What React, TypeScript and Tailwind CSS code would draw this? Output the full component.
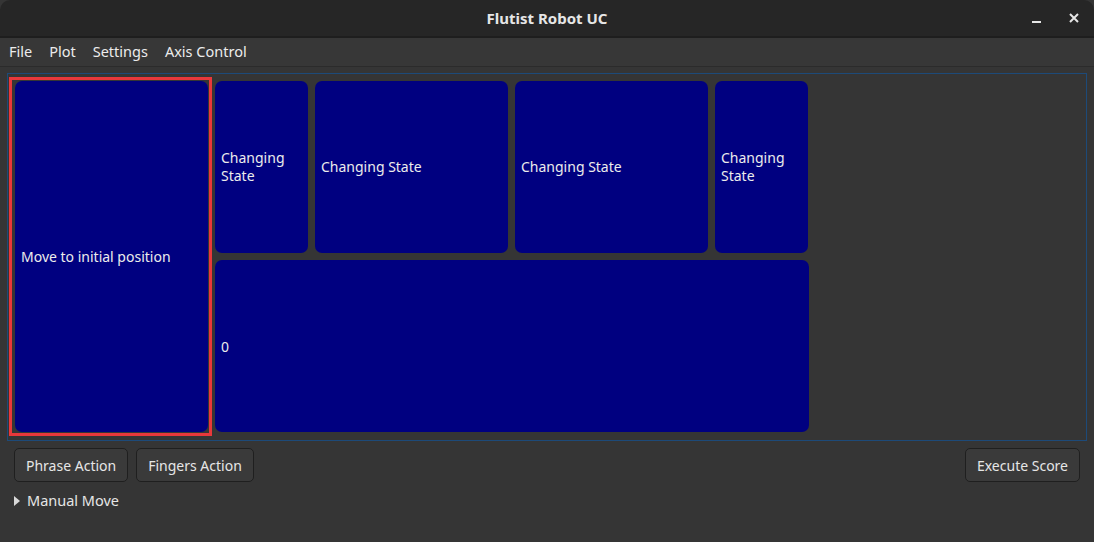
import { useState } from "react"

const font = { fontFamily: '"Noto Sans", "Open Sans", sans-serif' }

function StateButton({ label, wide }: { label: string; wide?: boolean }) {
  return (
    <button
      className={`h-full ${wide ? "w-[193px]" : "w-[93px]"} rounded-[7px] bg-[#000080] px-[6px] text-left text-[14px] leading-[18px] text-[#ececec]`}
    >
      {label}
    </button>
  )
}

export default function App() {
  const [open, setOpen] = useState(false)
  const menus = ["File", "Plot", "Settings", "Axis Control"]

  return (
    <div className="h-[542px] w-[1094px] overflow-hidden bg-[#353535] text-[#e8e8e8]" style={font}>
      {/* header bar */}
      <div className="relative flex h-[38px] items-center justify-center rounded-t-[10px] border-b-2 border-[#1e1e1e] bg-[#262626]">
        <span className="text-[15px] font-bold text-[#e6e6e6]">Flutist Robot UC</span>
        <div className="absolute right-[14px] top-0 flex h-full items-center gap-[26px]">
          <svg width="10" height="12" viewBox="0 0 10 12">
            <rect x="0" y="9" width="9" height="2" fill="#e6e6e6" />
          </svg>
          <svg width="12" height="12" viewBox="0 0 12 12">
            <path d="M2 2 L10 10 M10 2 L2 10" stroke="#e6e6e6" strokeWidth="2" />
          </svg>
        </div>
      </div>

      {/* menu bar */}
      <div className="flex h-[29px] items-center gap-[17px] border-b border-[#2b2b2b] bg-[#373737] px-[9px] text-[14.5px] text-[#ececec]">
        {menus.map((m) => (
          <span key={m}>{m}</span>
        ))}
      </div>

      {/* state panel */}
      <div className="mx-[7px] mt-[6px] border border-[#1d4a79] px-[7px] pt-[7px] pb-[8px]">
        <div className="flex h-[351px] gap-[7px]">
          <div className="relative h-full">
            <span className="pointer-events-none absolute -left-[6px] -top-[4px] -right-[4px] -bottom-[4px] border-[3px] border-[#e8383b]" />
            <StateButton label="Move to initial position" wide />
          </div>
          <div className="flex flex-col gap-[7px]">
            <div className="flex h-[172px] gap-[7px]">
              <StateButton label="Changing State" />
              <StateButton label="Changing State" wide />
              <StateButton label="Changing State" wide />
              <StateButton label="Changing State" />
            </div>
            <button className="h-[172px] w-[594px] rounded-[7px] bg-[#000080] px-[6px] text-left text-[14px] text-[#ececec]">
              0
            </button>
          </div>
        </div>
      </div>

      {/* actions */}
      <div className="mt-[7px] flex items-center px-[14px]">
        <div className="flex gap-[8px]">
          <button className="h-[34px] rounded-[5px] border border-[#1f1f1f] bg-[#3a3a3a] px-[11px] text-[14px] text-[#e6e6e6]">
            Phrase Action
          </button>
          <button className="h-[34px] rounded-[5px] border border-[#1f1f1f] bg-[#3a3a3a] px-[11px] text-[14px] text-[#e6e6e6]">
            Fingers Action
          </button>
        </div>
        <button className="ml-auto h-[34px] rounded-[5px] border border-[#1f1f1f] bg-[#3a3a3a] px-[11px] text-[14px] text-[#e6e6e6]">
          Execute Score
        </button>
      </div>

      <button
        onClick={() => setOpen(!open)}
        className="mt-[8px] flex items-center gap-[7px] px-[14px] text-[14.5px] text-[#e6e6e6]"
      >
        <svg width="6" height="10" viewBox="0 0 6 10" className={open ? "rotate-90" : ""}>
          <path d="M0 0 L6 5 L0 10 Z" fill="#d8d8d8" />
        </svg>
        Manual Move
      </button>
    </div>
  )
}
